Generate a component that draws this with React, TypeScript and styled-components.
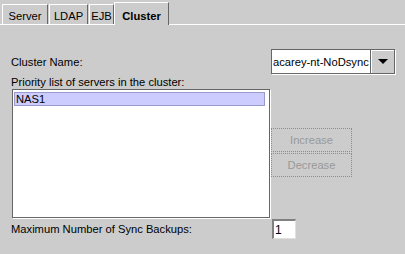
import React from 'react';
import styled, { createGlobalStyle } from 'styled-components';

const Global = createGlobalStyle`
  html, body {
    margin: 0;
    padding: 0;
    background: #cccccc;
  }
`;

const Page = styled.div`
  width: 405px;
  height: 254px;
  background: #cccccc;
  font-family: "Liberation Sans", Arial, sans-serif;
  font-size: 11.2px;
  color: #000;
  overflow: hidden;
  box-sizing: border-box;
`;

const TabBar = styled.div`
  display: flex;
  align-items: flex-end;
  gap: 1px;
  height: 25px;
  box-sizing: border-box;
  padding-left: 2px;
  border-bottom: 1px solid #ffffff;
`;

const Tab = styled.div<{ $w: number; $active?: boolean }>`
  position: relative;
  width: ${(p) => p.$w}px;
  box-sizing: border-box;
  line-height: 14px;
  text-align: center;
  background: #cccccc;
  border-top: 1px solid #ffffff;
  border-left: 1px solid #ffffff;
  border-right: 1px solid #666666;
  padding: ${(p) => (p.$active ? '6px 0 2px' : '4px 0 1px')};
  margin-bottom: ${(p) => (p.$active ? '-1px' : '0')};
  margin-left: ${(p) => (p.$active ? '-1px' : '0')};
  font-weight: ${(p) => (p.$active ? 'bold' : 'normal')};
  white-space: nowrap;
`;

const Form = styled.div`
  display: grid;
  grid-template-columns: 260px 1fr;
  padding: 24px 10px 0 11px;
`;

const Label = styled.div<{ $span?: boolean }>`
  line-height: 14px;
  align-self: center;
  white-space: nowrap;
  ${(p) => (p.$span ? 'grid-column: 1 / 3; margin-top: 1px;' : '')}
`;

const Combo = styled.div`
  display: flex;
  height: 25px;
  box-sizing: border-box;
  border: 1px solid #666666;
  box-shadow: 1px 1px 0 #ffffff;
  background: #cccccc;
`;

const ComboField = styled.div`
  flex: 1;
  background: #ffffff;
  border-right: 1px solid #666666;
  padding-left: 1px;
  display: flex;
  align-items: center;
  white-space: nowrap;
  overflow: hidden;
`;

const ComboButton = styled.div`
  width: 22px;
  display: flex;
  align-items: center;
  justify-content: center;
  border-top: 1px solid #ffffff;
  border-left: 1px solid #ffffff;
`;

const ListBox = styled.div`
  margin-left: 1px;
  width: 258px;
  height: 129px;
  box-sizing: border-box;
  background: #ffffff;
  border: 1px solid #666666;
  box-shadow: 1px 1px 0 #ffffff;
  padding: 2px 4px 0 1px;
`;

const ListRow = styled.div<{ $selected?: boolean }>`
  height: 14px;
  box-sizing: border-box;
  line-height: 12px;
  padding-left: 1px;
  background: ${(p) => (p.$selected ? '#ccccff' : 'transparent')};
  border: 1px solid ${(p) => (p.$selected ? '#9999cc' : 'transparent')};
`;

const ButtonColumn = styled.div`
  display: flex;
  flex-direction: column;
  gap: 1px;
  padding-top: 39px;
`;

const Button = styled.div<{ $disabled?: boolean }>`
  width: 81px;
  height: 24px;
  box-sizing: border-box;
  display: flex;
  align-items: center;
  justify-content: center;
  border: 1px dotted #8c8c8c;
  color: ${(p) => (p.$disabled ? '#999999' : '#000000')};
`;

const NumberField = styled.div`
  margin-top: 1px;
  margin-left: 1px;
  width: 24px;
  height: 20px;
  box-sizing: border-box;
  background: #ffffff;
  border-top: 2px solid #808080;
  border-left: 2px solid #808080;
  border-right: 1px solid #e0e0e0;
  border-bottom: 1px solid #e0e0e0;
  display: flex;
  align-items: center;
  padding-left: 1px;
  font-size: 12px;
`;

const BottomLabel = styled(Label)`
  margin-top: 1px;
`;

export default function App() {
  return (
    <Page>
      <Global />
      <TabBar>
        <Tab $w={46}>Server</Tab>
        <Tab $w={39}>LDAP</Tab>
        <Tab $w={25}>EJB</Tab>
        <Tab $w={55} $active>
          Cluster
        </Tab>
      </TabBar>
      <Form>
        <Label>Cluster Name:</Label>
        <Combo>
          <ComboField>acarey-nt-NoDsync</ComboField>
          <ComboButton>
            <svg width="10" height="6" viewBox="0 0 10 6">
              <polygon points="0,0 10,0 5,5" fill="#000" />
            </svg>
          </ComboButton>
        </Combo>
        <Label $span>Priority list of servers in the cluster:</Label>
        <ListBox>
          <ListRow $selected>NAS1</ListRow>
        </ListBox>
        <ButtonColumn>
          <Button $disabled>Increase</Button>
          <Button $disabled>Decrease</Button>
        </ButtonColumn>
        <BottomLabel>Maximum Number of Sync Backups:</BottomLabel>
        <NumberField>1</NumberField>
      </Form>
    </Page>
  );
}
